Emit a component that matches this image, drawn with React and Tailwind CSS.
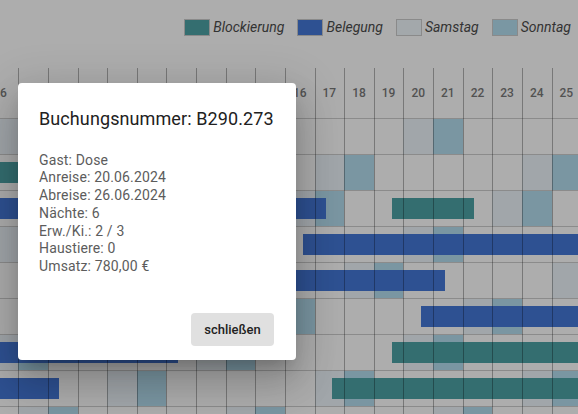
import React from "react";

const COL = 29.63;
const days = Array.from({ length: 20 }, (_, i) => i + 6);

const bars = [
  [],
  [{ s: 1, e: 10, c: "teal" }],
  [
    { s: 1, e: 17, c: "blue" },
    { s: 19, e: 22, c: "teal" },
  ],
  [{ s: 16, e: 31, c: "blue" }],
  [
    { s: 1, e: 6, c: "blue" },
    { s: 9, e: 21, c: "blue" },
  ],
  [{ s: 20, e: 26, c: "blue" }],
  [
    { s: 1, e: 12, c: "blue" },
    { s: 19, e: 31, c: "teal" },
  ],
  [
    { s: 1, e: 8, c: "blue" },
    { s: 17, e: 31, c: "teal" },
  ],
  [],
];

const barCls = {
  teal: "absolute top-[7px] h-[21px] bg-[#346e70]",
  blue: "absolute top-[7px] h-[21px] bg-[#2e5192]",
};

function cellClass(month, day) {
  const wd = new Date(2024, month, day).getDay();
  if (wd === 6) return "w-[29.63px] shrink-0 bg-[#a1a6aa]";
  if (wd === 0) return "w-[29.63px] shrink-0 bg-[#7a96a2]";
  return "w-[29.63px] shrink-0";
}

function LegendItem({ color, label }) {
  return (
    <div className="flex items-center">
      <div className={`w-[26px] h-[17px] border border-[#8a8a8a] ${color}`} />
      <span className="ml-[3px] italic text-[14px] leading-[17px] text-[#333]">
        {label}
      </span>
    </div>
  );
}

export default function App() {
  const lines = [
    "Gast: Dose",
    "Anreise: 20.06.2024",
    "Abreise: 26.06.2024",
    "Nächte: 6",
    "Erw./Ki.: 2 / 3",
    "Haustiere: 0",
    "Umsatz: 780,00 €",
  ];
  return (
    <div className="relative w-[578px] h-[414px] overflow-hidden bg-[#adadad] [font-family:Roboto,sans-serif]">
      <div className="h-[68px] flex justify-end items-start pt-[19px] pr-[7px] gap-[13px]">
        <LegendItem color="bg-[#346e70]" label="Blockierung" />
        <LegendItem color="bg-[#2e5192]" label="Belegung" />
        <LegendItem color="bg-[#a3a8ab]" label="Samstag" />
        <LegendItem color="bg-[#7a97a3]" label="Sonntag" />
      </div>

      <div className="relative -ml-[11.33px] w-[592.6px]">
        <div className="flex h-[50px]">
          {days.map((d) => (
            <div
              key={d}
              className="w-[29.63px] shrink-0 flex items-center justify-center text-[12px] font-medium text-[#525252]"
            >
              {d}
            </div>
          ))}
        </div>
        {bars.map((rowBars, m) => (
          <div key={m} className="relative flex h-[36px] border-t border-[#8b8b8b]">
            {days.map((d) => (
              <div key={d} className={cellClass(m, d)} />
            ))}
            {rowBars.map((b, i) => (
              <div
                key={i}
                className={barCls[b.c]}
                style={{
                  left: (b.s - 6) * COL + 17.7,
                  width: (b.e - b.s) * COL - 6.2,
                }}
              />
            ))}
          </div>
        ))}
        <div className="absolute inset-0 flex pointer-events-none">
          {days.map((d) => (
            <div key={d} className="w-[29.63px] shrink-0 border-l border-black/30" />
          ))}
        </div>
      </div>

      <div className="absolute left-[18px] top-[83px] w-[278px] h-[277px] bg-white rounded-[4px] pt-[24px] pl-[21px] pr-[22px] shadow-[0_11px_15px_-7px_rgba(0,0,0,0.2),0_24px_38px_3px_rgba(0,0,0,0.14),0_9px_46px_8px_rgba(0,0,0,0.12)]">
        <div className="text-[18px] leading-[24px] tracking-[0.1px] text-[#212121]">
          Buchungsnummer: B290.273
        </div>
        <div className="mt-[20.5px] text-[14px] leading-[17.8px] tracking-[0.15px] text-[#5c5c5c]">
          {lines.map((l) => (
            <div key={l}>{l}</div>
          ))}
        </div>
        <div className="flex justify-end mt-[37px]">
          <button className="w-[83px] h-[33px] rounded-[4px] bg-[#e0e0e0] flex items-center justify-center text-[13px] font-medium text-[#222]">
            schließen
          </button>
        </div>
      </div>
    </div>
  );
}
